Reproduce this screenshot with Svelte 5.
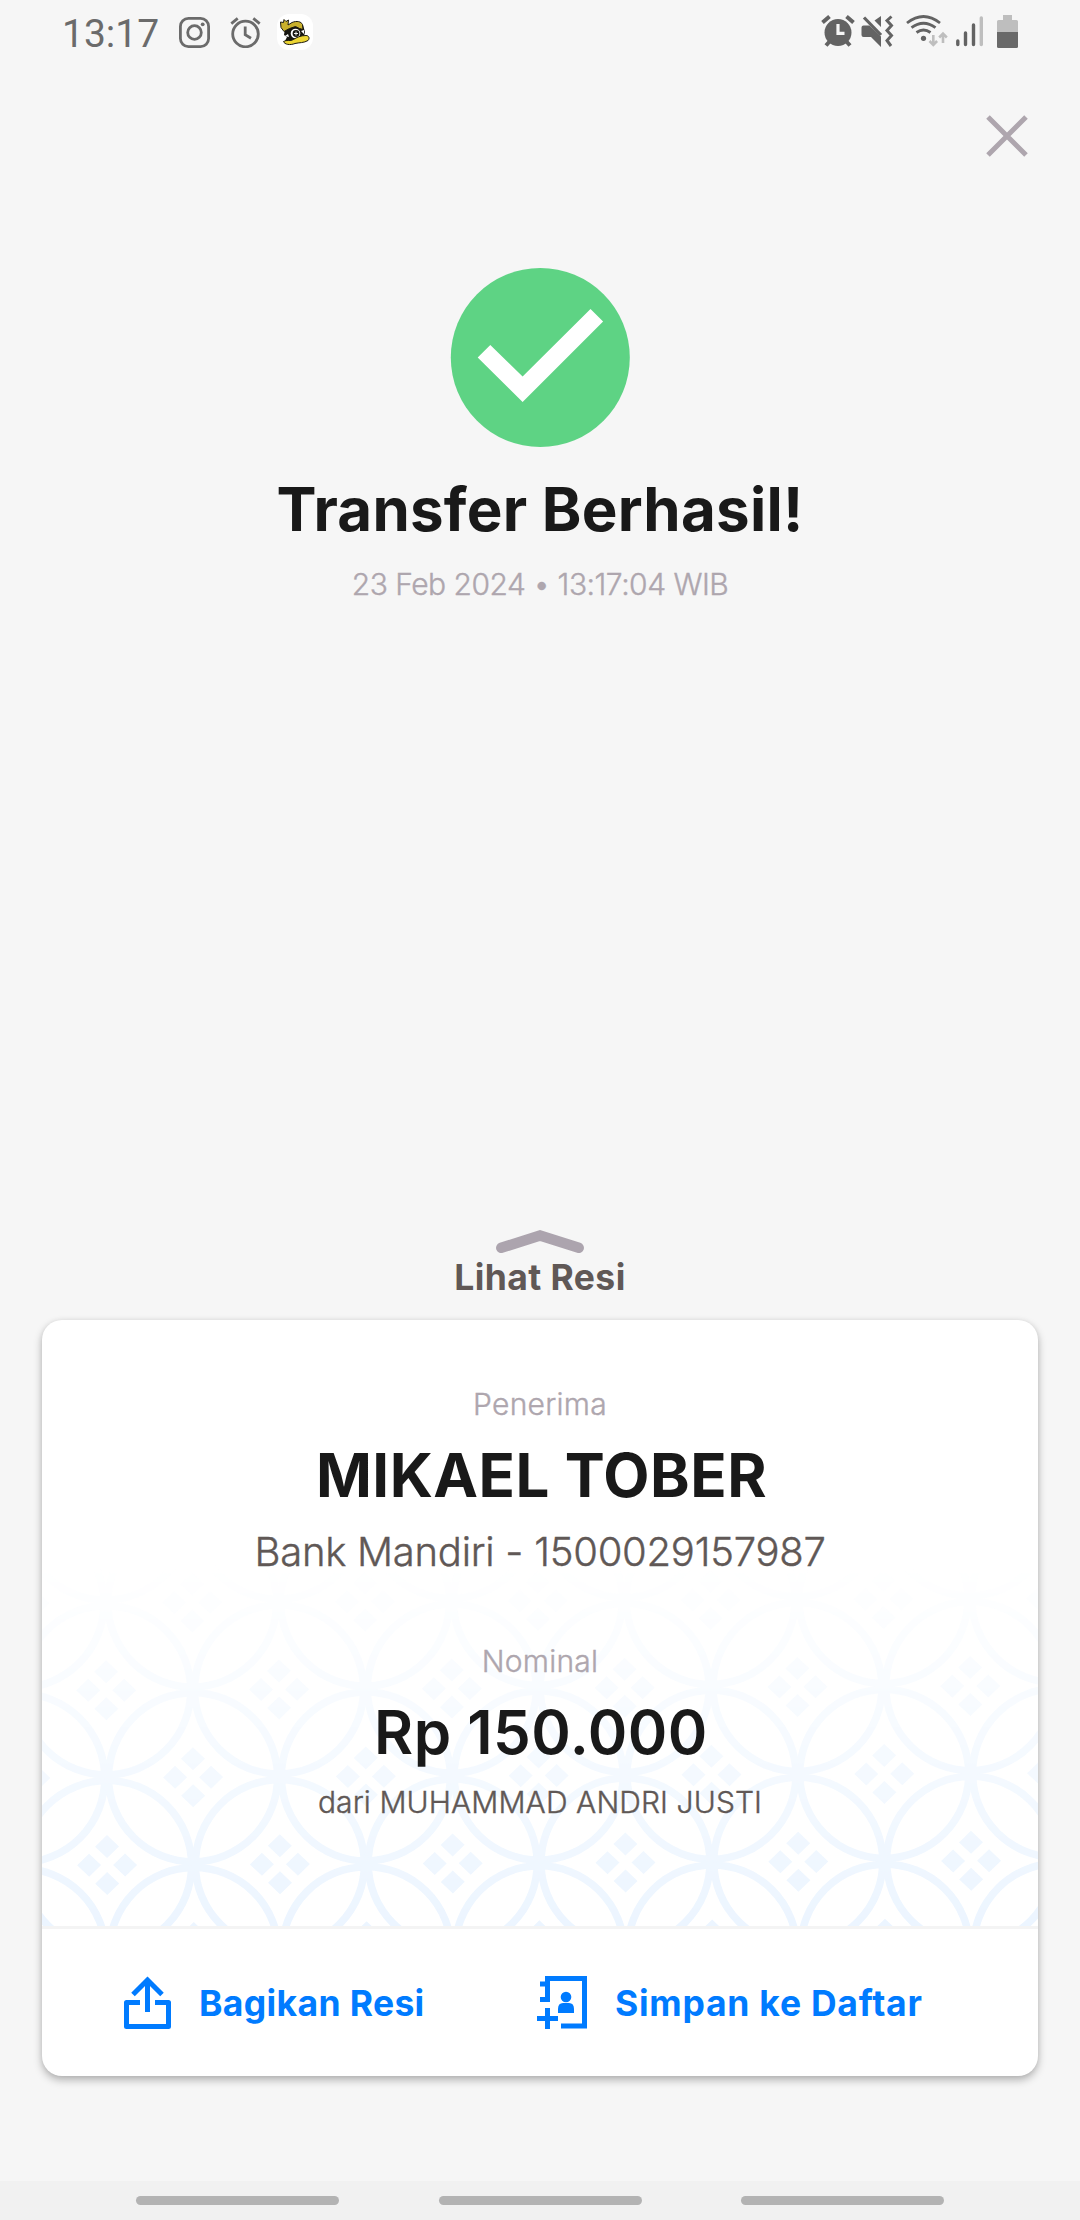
<script lang="ts">
	interface Transfer {
		date: string;
		time: string;
		recipient: string;
		account: string;
		amount: string;
		sender: string;
	}

	const transfer: Transfer = {
		date: '23 Feb 2024',
		time: '13:17:04 WIB',
		recipient: 'MIKAEL TOBER',
		account: 'Bank Mandiri - 1500029157987',
		amount: 'Rp 150.000',
		sender: 'dari MUHAMMAD ANDRI JUSTI'
	};

	// kawung motif: rows of tangent circles, every other row shifted by half a step
	const STEP_X = 172.8;
	const STEP_Y = 87.4;
	const motif: { x: number; y: number }[] = [];
	for (let row = 0; row < 6; row++) {
		const shift = row % 2 === 0 ? 0 : STEP_X / 2;
		for (let col = -2; col < 7; col++) {
			motif.push({ x: 151.5 + shift + col * STEP_X, y: 388.5 - row * STEP_Y });
		}
	}
</script>

<div class="screen">
	<div class="status">
		<div class="status-left">
			<span class="clock">13:17</span>
			<svg class="insta" width="31" height="31" viewBox="0 0 31 31" fill="none" stroke="#6b6b6b" stroke-width="2.8">
				<rect x="1.4" y="1.4" width="28.2" height="28.2" rx="8" />
				<circle cx="15.5" cy="15.5" r="6.8" />
				<circle cx="23.7" cy="7.3" r="1.9" fill="#6b6b6b" stroke="none" />
			</svg>
			<svg class="alarm" width="31" height="31" viewBox="0 0 31 31" fill="none" stroke="#6b6b6b" stroke-width="2.8">
				<circle cx="15.5" cy="17" r="12.8" />
				<path d="M15.2 9.5v8.3l5.8 3.5M1.3 6.6l6.4-5.2M29.7 6.6l-6.4-5.2" />
			</svg>
			<svg width="36" height="36" viewBox="0 0 36 36">
				<rect width="36" height="36" rx="12" fill="#fff" />
				<path d="M8 14l5-2 13-1 2 7-2 8-13 4-5-3 2-4-3-2z" fill="#16150f" />
				<path d="M3.5 8l3 .5.5-3 2 2 2.500-1.500-.5 5 4-2.500c5-2 9-1 10.500 2l.5 5-3.500-1-4-2-6 2-5.500 3-3-4z" fill="#c9b02c" stroke="#1c1a10" />
				<path d="M8 22l3-2 1 3zM24 17l3-1v4z" fill="#fff" />
				<circle cx="18.5" cy="19.5" r="4.8" fill="#fff" />
				<circle cx="19" cy="19.5" r="3.4" fill="#16150f" />
				<path d="M17 19.500h4M19 17.500v4" stroke="#fff" stroke-width=".9" />
				<path d="M6.500 27.500c3-2 7 0 10-2s7-4 12.500-4c3 0 4 3 2 5-4 2.500-9 2-13 3-5 2-10.500 1-11.500-2z" fill="#ecd534" stroke="#1c1a10" />
			</svg>
		</div>
		<svg width="200" height="36" viewBox="820 14 200 36">
			<g fill="none" stroke="#636363">
				<circle cx="838" cy="32.5" r="13.5" fill="#636363" stroke="none" />
				<path d="M822.500 22.500l7-6M853.500 22.500l-7-6M830 41l-4 4.500M846 41l4 4.500" stroke-width="4" />
				<path d="M838 24v9.300h6.500" stroke="#f6f6f6" stroke-width="3.2" />
				<path d="M864 17.500L881 35" stroke-width="3.2" />
				<path d="M881 16v11l-6.500-6.500zM863.500 25.500h6l11.500 11V47l-10-10h-7.500q-2 0-2-2v-7.500q0-2 2-2z" fill="#636363" stroke="none" />
				<path d="M891.500 16.500l-4.500 4 4.500 5-4.500 5 4.500 5-4.500 5 4 5.500" stroke-width="3" />
				<path d="M907 23q16.500-13 33 0M911.500 27.700q12-9 24 0M916.500 32.500q7-5 14 0" stroke-width="2.8" />
				<circle cx="923.5" cy="38.3" r="2.6" fill="#636363" stroke="none" />
			</g>
			<path d="M933.300 35v9M929.500 41l3.800 3.800 3.800-3.800M943 43v-9M939.200 37.500l3.800-3.800 3.800 3.800" fill="none" stroke="#bebebe" stroke-width="2.6" />
			<g stroke="#636363" stroke-width="3.4" stroke-linecap="round">
				<path d="M957.800 41v3.500M965.500 33v11.500M973.500 25v19.500" />
				<path d="M981.300 18v26.500" stroke="#bebebe" />
			</g>
			<path d="M1003 15h9v5h4.500q1.500 0 1.500 1.500V32h-21V21.500q0-1.500 1.500-1.500h4.500z" fill="#bebebe" />
			<path d="M997 32h21v14.500q0 1.500-1.500 1.500h-18q-1.500 0-1.500-1.500z" fill="#696969" />
		</svg>
	</div>

	<div class="topbar">
		<svg width="42" height="42" viewBox="0 0 42 42" stroke="#aea6ae" stroke-width="5">
			<path d="M2 2l38 38M40 2L2 40" />
		</svg>
	</div>

	<div class="hero">
		<svg width="180" height="180" viewBox="0 0 180 180">
			<circle cx="90.3" cy="89.5" r="89.5" fill="#5ed384" />
			<path d="M27.700 89.500L40.300 77l32.300 31.500L140.500 41l12.600 12.500-80.500 80.500z" fill="#fff" />
		</svg>
		<h1>Transfer Berhasil!</h1>
		<p class="date">{transfer.date} • {transfer.time}</p>
	</div>

	<div class="toggle">
		<svg width="92" height="26" viewBox="0 0 92 26" fill="none" stroke="#aca4ae" stroke-width="10.5" stroke-linecap="round">
			<path d="M7.300 18.800L46 6.500l38.700 12.300" />
		</svg>
		<span>Lihat Resi</span>
	</div>

	<div class="card">
		<div class="receipt">
			<svg class="motif" width="996" height="362" viewBox="0 0 996 362">
				<defs>
					<linearGradient id="fade" x1="0" y1="0" x2="0" y2="1">
						<stop offset="0" stop-color="#fff" stop-opacity="0" />
						<stop offset="1" stop-color="#fff" />
					</linearGradient>
					<mask id="fade-mask">
						<rect width="996" height="362" fill="url(#fade)" />
					</mask>
				</defs>
				<g mask="url(#fade-mask)">
					<g transform="rotate(-0.28 60 300)">
						{#each motif as { x, y }}
							<circle cx={x} cy={y} r="84.5" fill="none" stroke="#ecf5ff" stroke-width="7.5" />
							<path
								d="M{x} {y - 30}l12 11.500-12 11.500-12-11.500zM{x} {y + 7}l12 11.500-12 11.500-12-11.500zM{x - 18} {y - 11.5}l12 11.500-12 11.500-12-11.500zM{x + 18} {y - 11.5}l12 11.500-12 11.500-12-11.500z"
								fill="#ecf5ff"
							/>
						{/each}
					</g>
				</g>
			</svg>
			<div class="details">
				<p class="label">Penerima</p>
				<p class="name">{transfer.recipient}</p>
				<p class="account">{transfer.account}</p>
				<p class="label nominal">Nominal</p>
				<p class="amount">{transfer.amount}</p>
				<p class="sender">{transfer.sender}</p>
			</div>
		</div>
		<div class="actions">
			<div class="action">
				<svg width="47" height="53" viewBox="0 0 47 53" fill="none" stroke="#007bff" stroke-width="5">
					<path d="M16 26.500H2.500v24h42v-24H31" stroke-linejoin="round" />
					<path d="M23.500 36V4M9 18.500L23.500 4 38 18.500" />
				</svg>
				<span>Bagikan Resi</span>
			</div>
			<div class="action">
				<svg width="50" height="53" viewBox="0 0 50 53" fill="none" stroke="#007bff" stroke-width="5">
					<path d="M3 8h7.500M3 23.500h7.500V2.500h37v47.500H24" />
					<path d="M0 42.500h21M10.500 32v21" />
					<circle cx="29" cy="21" r="5.3" fill="#007bff" stroke="none" />
					<path d="M21 37v-4q0-6 5-6h6q5 0 5 6v4z" fill="#007bff" stroke="none" />
				</svg>
				<span class="save">Simpan ke Daftar</span>
			</div>
		</div>
	</div>

	<div class="navbar">
		<i></i>
		<i></i>
		<i></i>
	</div>
</div>

<style>
	:global(body) {
		margin: 0;
		background: #f6f6f6;
	}

	.screen {
		width: 1080px;
		height: 2220px;
		display: flex;
		flex-direction: column;
		background: #f6f6f6;
		font-family: Inter, 'Liberation Sans', sans-serif;
		color: #191919;
		overflow: hidden;
	}

	svg {
		display: block;
		flex-shrink: 0;
	}

	h1,
	p {
		margin: 0;
		white-space: nowrap;
	}

	/* light text sits between the light and regular cuts */
	.date,
	.label,
	.account,
	.sender {
		font-weight: 300;
		-webkit-text-stroke: 0.4px currentColor;
	}

	.status {
		height: 66px;
		box-sizing: border-box;
		padding: 14px 60px 0 62px;
		display: flex;
		justify-content: space-between;
		align-items: flex-start;
	}

	.status-left {
		display: flex;
		align-items: center;
		height: 36px;
	}

	.clock {
		width: 117px;
		padding-top: 3px;
		font: 39px/36px Roboto, sans-serif;
		color: #6b6b6b;
	}

	.insta { margin-right: 20px; }
	.alarm { margin-right: 16px; }

	.topbar {
		height: 202px;
		box-sizing: border-box;
		padding: 49px 52px 0 0;
		display: flex;
		justify-content: flex-end;
	}

	.hero {
		display: flex;
		flex-direction: column;
		align-items: center;
	}

	h1 {
		margin-top: 25px;
		font-size: 60px;
		line-height: 72px;
		font-weight: 700;
		letter-spacing: 0.25px;
	}

	.date {
		margin-top: 21px;
		font-size: 30px;
		line-height: 36px;
		letter-spacing: -0.5px;
		color: #aea6ae;
	}

	.toggle {
		margin-top: auto;
		display: flex;
		flex-direction: column;
		align-items: center;
		font-size: 35.5px;
		line-height: 45px;
		font-weight: 700;
		letter-spacing: 0.4px;
		color: #605856;
	}

	.card {
		margin: 20px 42px 105px;
		border-radius: 20px;
		background: #fff;
		box-shadow: 0 4px 8px rgba(0, 0, 0, 0.28), 0 0 5px rgba(0, 0, 0, 0.06);
	}

	.receipt {
		position: relative;
		height: 606px;
		border-bottom: 3px solid #f4f4f4;
	}

	.motif {
		position: absolute;
		left: 0;
		bottom: 0;
	}

	.details {
		position: relative;
		padding-top: 66px;
		text-align: center;
	}

	.label {
		font-size: 30px;
		line-height: 36px;
		letter-spacing: 0.25px;
		color: #aea6ae;
	}

	.name {
		margin-top: 17px;
		padding-left: 3px;
		font-size: 60px;
		line-height: 72px;
		font-weight: 700;
		letter-spacing: 0.5px;
	}

	.account {
		margin-top: 17px;
		font-size: 40px;
		line-height: 48px;
		letter-spacing: -0.25px;
		color: #605856;
	}

	.nominal { margin-top: 67px; }

	.amount {
		margin-top: 17px;
		padding-left: 2px;
		font-size: 60px;
		line-height: 72px;
		font-weight: 600;
		letter-spacing: 0.5px;
	}

	.sender {
		margin-top: 16px;
		font-size: 30px;
		line-height: 36px;
		letter-spacing: 0.1px;
		color: #605856;
	}

	.actions {
		height: 147px;
		padding-left: 82px;
		display: grid;
		grid-template-columns: 413px 1fr;
		align-items: center;
		font-size: 35.5px;
		line-height: 44px;
		font-weight: 700;
		color: #007bff;
	}

	.action {
		display: flex;
		align-items: center;
		gap: 28px;
	}

	.action span {
		padding-top: 2px;
		letter-spacing: 0.35px;
	}

	.action .save {
		letter-spacing: 0.75px;
	}

	.navbar {
		height: 39px;
		box-sizing: border-box;
		padding: 15px 136px 0;
		display: flex;
		justify-content: space-between;
		background: #f1f1f1;
	}

	.navbar i {
		width: 203px;
		height: 9px;
		border-radius: 5px;
		background: #b3b3b3;
	}
</style>
